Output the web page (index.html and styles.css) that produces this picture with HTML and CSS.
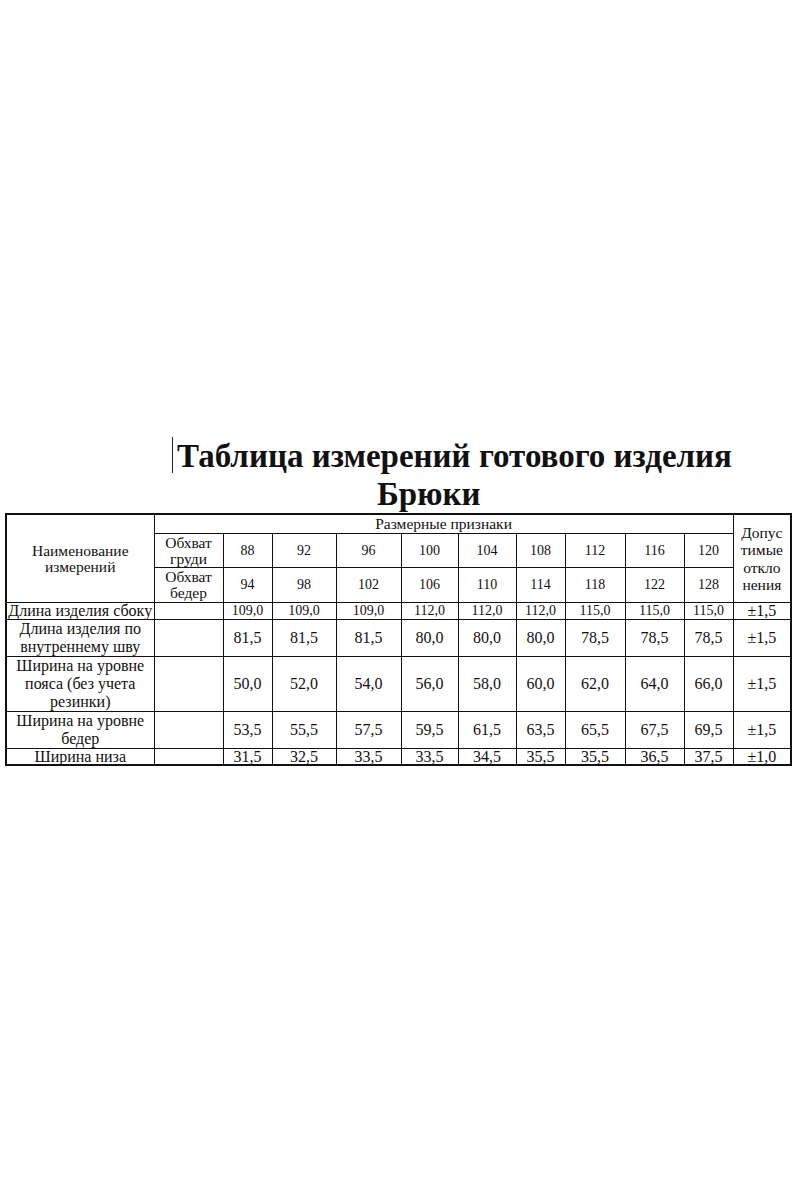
FILE: index.html
```html
<!DOCTYPE html>
<html lang="ru">
<head>
<meta charset="utf-8">
<title>Таблица измерений готового изделия</title>
<link rel="stylesheet" href="styles.css">
</head>
<body>
<div class="page">
  <div class="title">
    <div class="title-line1"><span class="cursor"></span>Таблица измерений готового изделия</div>
    <div class="title-line2">Брюки</div>
  </div>
  <table class="sizes">
    <colgroup>
      <col class="c-name"><col class="c-sign"><col class="c-88"><col class="c-92"><col class="c-96"><col class="c-100"><col class="c-104"><col class="c-108"><col class="c-112"><col class="c-116"><col class="c-120"><col class="c-tol">
    </colgroup>
    <tr class="r-head1">
      <td rowspan="3" class="hd">Наименование<br>измерений</td>
      <td colspan="10" class="hd">Размерные признаки</td>
      <td rowspan="3" class="hd tol">Допус<br>тимые<br>откло<br>нения</td>
    </tr>
    <tr class="r-head2">
      <td class="hd">Обхват<br>груди</td>
      <td class="num">88</td><td class="num">92</td><td class="num">96</td><td class="num">100</td><td class="num">104</td><td class="num">108</td><td class="num">112</td><td class="num">116</td><td class="num">120</td>
    </tr>
    <tr class="r-head3">
      <td class="hd">Обхват<br>бедер</td>
      <td class="num">94</td><td class="num">98</td><td class="num">102</td><td class="num">106</td><td class="num">110</td><td class="num">114</td><td class="num">118</td><td class="num">122</td><td class="num">128</td>
    </tr>
    <tr class="r-1">
      <td class="lbl">Длина изделия сбоку</td><td></td>
      <td class="sm">109,0</td><td class="sm">109,0</td><td class="sm">109,0</td><td class="sm">112,0</td><td class="sm">112,0</td><td class="sm">112,0</td><td class="sm">115,0</td><td class="sm">115,0</td><td class="sm">115,0</td><td>±1,5</td>
    </tr>
    <tr class="r-2">
      <td class="lbl">Длина изделия по<br>внутреннему шву</td><td></td>
      <td>81,5</td><td>81,5</td><td>81,5</td><td>80,0</td><td>80,0</td><td>80,0</td><td>78,5</td><td>78,5</td><td>78,5</td><td>±1,5</td>
    </tr>
    <tr class="r-3">
      <td class="lbl">Ширина на уровне<br>пояса (без учета<br>резинки)</td><td></td>
      <td>50,0</td><td>52,0</td><td>54,0</td><td>56,0</td><td>58,0</td><td>60,0</td><td>62,0</td><td>64,0</td><td>66,0</td><td>±1,5</td>
    </tr>
    <tr class="r-4">
      <td class="lbl">Ширина на уровне<br>бедер</td><td></td>
      <td>53,5</td><td>55,5</td><td>57,5</td><td>59,5</td><td>61,5</td><td>63,5</td><td>65,5</td><td>67,5</td><td>69,5</td><td>±1,5</td>
    </tr>
    <tr class="r-5">
      <td class="lbl">Ширина низа</td><td></td>
      <td>31,5</td><td>32,5</td><td>33,5</td><td>33,5</td><td>34,5</td><td>35,5</td><td>35,5</td><td>36,5</td><td>37,5</td><td>±1,0</td>
    </tr>
  </table>
</div>
</body>
</html>
```

FILE: styles.css
```css
html, body {
  margin: 0;
  padding: 0;
  background: #ffffff;
}
.page {
  width: 800px;
  height: 1200px;
  padding-top: 437px;
  box-sizing: border-box;
  font-family: "Liberation Serif", "Times New Roman", serif;
  color: #111111;
}
.title {
  font-weight: bold;
  font-size: 33px;
  line-height: 38px;
  white-space: nowrap;
}
.title-line1 {
  padding-left: 172px;
}
.title-line2 {
  padding-left: 377px;
}
.cursor {
  display: inline-block;
  width: 1px;
  height: 36px;
  background: #222222;
  vertical-align: top;
  margin-right: 4px;
}
.sizes {
  margin-left: 5px;
  width: 786px;
  border-collapse: collapse;
  table-layout: fixed;
  border: 2px solid #111111;
}
.sizes td {
  font-family: "Liberation Serif", "Times New Roman", serif;
  border: 1px solid #111111;
  padding: 0;
  text-align: center;
  vertical-align: middle;
  font-size: 16px;
  line-height: 18px;
  overflow: hidden;
  white-space: nowrap;
}
.sizes td.hd {
  font-size: 15.5px;
  line-height: 16px;
}
.sizes td.num {
  font-size: 14px;
  line-height: 16px;
}
.sizes td.sm {
  font-size: 14px;
}
.sizes td.tol {
  font-size: 15.5px;
  line-height: 17.5px;
}
.c-name { width: 148px; }
.c-sign { width: 69px; }
.c-88 { width: 49px; }
.c-92 { width: 64px; }
.c-96 { width: 65px; }
.c-100 { width: 57px; }
.c-104 { width: 58px; }
.c-108 { width: 49px; }
.c-112 { width: 60px; }
.c-116 { width: 59px; }
.c-120 { width: 49px; }
.c-tol { width: 58px; }
.sizes .r-head1 td { height: 18px; }
.sizes .r-head2 td { height: 33px; }
.sizes .r-head3 td { height: 34px; }
.sizes .r-1 td { height: 16px; line-height: 16px; }
.sizes .r-2 td { height: 36px; }
.sizes .r-3 td { height: 52px; }
.sizes .r-4 td { height: 36px; }
.sizes .r-5 td { height: 14px; line-height: 15px; }
```
